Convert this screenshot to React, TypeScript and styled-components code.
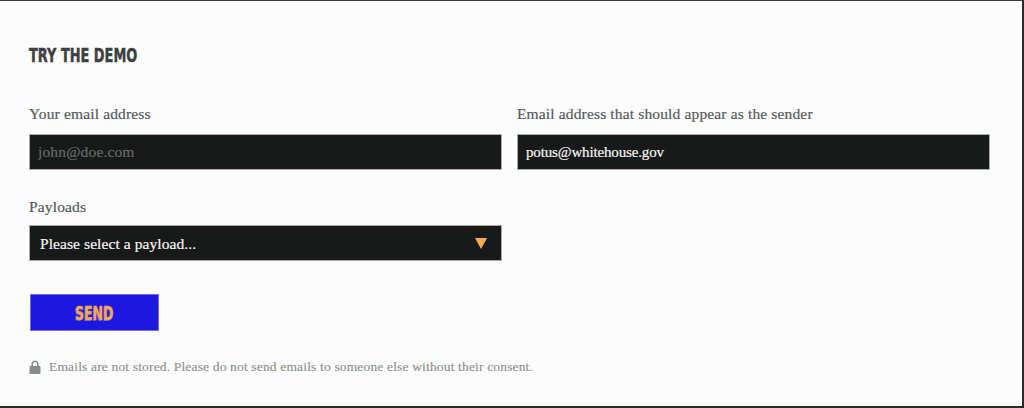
import styled, { createGlobalStyle } from "styled-components";

const GlobalStyle = createGlobalStyle`
  html, body {
    margin: 0;
    padding: 0;
    background: #2b2b2b;
  }
`;

const Frame = styled.div`
  box-sizing: border-box;
  width: 1024px;
  height: 408px;
  border-top: 1px solid #3a3a3a;
  border-right: 2px solid #2a2a2a;
  border-bottom: 2px solid #2a2a2a;
  background: #fcfcfc;
  padding: 44px 32px 0 29px;
  font-family: "Liberation Serif", serif;
`;

const Title = styled.h2`
  margin: 0 0 40px;
  height: 20px;
  font-family: "DejaVu Sans", "Liberation Sans", sans-serif;
  font-weight: 700;
  font-size: 19px;
  line-height: 20px;
  color: #3c3f3f;
  text-transform: uppercase;
  white-space: nowrap;
  -webkit-text-stroke: 0.5px #3c3f3f;
  transform: scaleX(0.68);
  transform-origin: left center;
`;

const Row = styled.div`
  display: grid;
  grid-template-columns: 473px 473px;
  gap: 15px;
  margin-bottom: 28px;
`;

const Field = styled.label<{ $gap: number }>`
  display: flex;
  flex-direction: column;
  gap: ${(props) => props.$gap}px;
`;

const LabelText = styled.span`
  font-size: 15.5px;
  line-height: 18px;
  color: #555a5c;
  letter-spacing: 0.15px;
  -webkit-text-stroke: 0.2px #555a5c;
`;

const TextInput = styled.input`
  box-sizing: border-box;
  width: 100%;
  height: 36px;
  padding: 1px 8px 0;
  border: 1px solid #a9a9a9;
  border-radius: 0;
  outline: none;
  background: #181a19;
  color: #f4f4f4;
  font-family: inherit;
  font-size: 15px;
  letter-spacing: -0.15px;
  -webkit-text-stroke: 0.2px #f4f4f4;

  &::placeholder {
    color: #666a6a;
    opacity: 1;
    font-size: 15.5px;
    letter-spacing: 0.15px;
    -webkit-text-stroke: 0.2px #666a6a;
  }
`;

const SelectWrap = styled.div`
  position: relative;
  height: 36px;
`;

const Select = styled.select`
  box-sizing: border-box;
  width: 100%;
  height: 36px;
  padding: 1px 10px 0;
  border: 1px solid #a9a9a9;
  border-radius: 0;
  outline: none;
  appearance: none;
  background: #181a19;
  color: #f4f4f4;
  font-family: inherit;
  font-size: 15.5px;
  letter-spacing: 0.08px;
  -webkit-text-stroke: 0.2px #f4f4f4;
`;

const Arrow = styled.svg`
  position: absolute;
  top: 13px;
  right: 15px;
  width: 12px;
  height: 11px;
  pointer-events: none;
`;

const SendButton = styled.button`
  display: block;
  box-sizing: border-box;
  width: 129px;
  height: 37px;
  margin: 33px 0 0 1px;
  padding: 0;
  border: 1px solid #6f6cf0;
  border-radius: 0;
  background: #1d18e0;
  color: #f5a94f;
`;

const SendLabel = styled.span`
  display: inline-block;
  font-family: "DejaVu Sans", "Liberation Sans", sans-serif;
  font-weight: 700;
  font-size: 19px;
  text-transform: uppercase;
  -webkit-text-stroke: 0.4px #f5a94f;
  text-shadow: -1px 1px 1px rgba(140, 130, 240, 0.6);
  transform: scaleX(0.66);
`;

const Notice = styled.p`
  display: flex;
  align-items: center;
  gap: 8px;
  margin: 27px 0 0;
  font-size: 13.5px;
  line-height: 18px;
  color: #8c8f90;
  letter-spacing: 0.16px;
  -webkit-text-stroke: 0.15px #8c8f90;
`;

const Lock = styled.svg`
  width: 12px;
  height: 14px;
  flex: none;
`;

export default function App() {
  return (
    <>
      <GlobalStyle />
      <Frame>
        <Title>Try the demo</Title>
        <Row>
          <Field $gap={11}>
            <LabelText>Your email address</LabelText>
            <TextInput placeholder="john@doe.com" />
          </Field>
          <Field $gap={11}>
            <LabelText>Email address that should appear as the sender</LabelText>
            <TextInput defaultValue="potus@whitehouse.gov" />
          </Field>
        </Row>
        <Row>
          <Field $gap={9}>
            <LabelText>Payloads</LabelText>
            <SelectWrap>
              <Select defaultValue="">
                <option value="">Please select a payload...</option>
              </Select>
              <Arrow viewBox="0 0 12 11">
                <path d="M0 0h12L6 11z" fill="#f5a94f" />
              </Arrow>
            </SelectWrap>
          </Field>
        </Row>
        <SendButton type="button">
          <SendLabel>Send</SendLabel>
        </SendButton>
        <Notice>
          <Lock viewBox="0 0 12 14">
            <path
              d="M2.5 6V4a3.5 3.5 0 0 1 7 0v2h1a1 1 0 0 1 1 1v6a1 1 0 0 1-1 1h-9a1 1 0 0 1-1-1V7a1 1 0 0 1 1-1zm1.5 0h4V4a2 2 0 0 0-4 0z"
              fill="#888b8c"
              fillRule="evenodd"
            />
          </Lock>
          Emails are not stored. Please do not send emails to someone else without their consent.
        </Notice>
      </Frame>
    </>
  );
}
